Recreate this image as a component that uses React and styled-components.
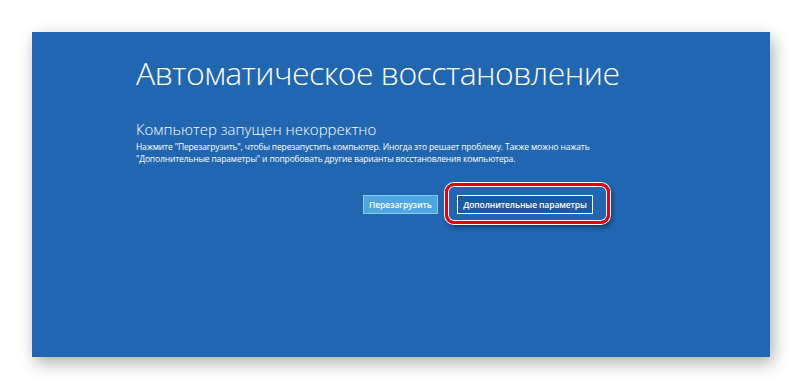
import React from 'react'
import styled, { createGlobalStyle } from 'styled-components'

const GlobalStyle = createGlobalStyle`
  html, body {
    margin: 0;
    padding: 0;
    background: #ffffff;
  }
  body {
    font-family: "Open Sans", "Noto Sans", sans-serif;
  }
`

const Page = styled.div`
  width: 802px;
  height: 390px;
  padding: 32px 0 0 32px;
  box-sizing: border-box;
`

const Screen = styled.div`
  width: 738px;
  height: 325px;
  background: #2066b1;
  box-shadow: 3px 6px 16px rgba(0, 0, 0, 0.32);
  padding: 21px 0 0 104px;
  box-sizing: border-box;
  color: #ffffff;
`

const Title = styled.h1`
  margin: 0;
  font-weight: 300;
  font-size: 32px;
  line-height: 40px;
  letter-spacing: -0.55px;
`

const Subtitle = styled.h2`
  margin: 27px 0 0;
  font-weight: 300;
  font-size: 15px;
  line-height: 18px;
`

const Body = styled.p`
  margin: 3px 0 0;
  font-size: 8.5px;
  line-height: 12px;
  letter-spacing: -0.15px;
  white-space: nowrap;
`

const Actions = styled.div`
  display: flex;
  gap: 19px;
  margin: 30px 0 0 227px;
`

const Button = styled.button`
  width: ${p => p.$width}px;
  height: 19px;
  padding: 0;
  font-family: "Open Sans", "Noto Sans", sans-serif;
  font-size: 8.5px;
  font-weight: 600;
  letter-spacing: -0.1px;
  color: #ffffff;
  background: ${p => (p.$primary ? '#1b5aa0' : '#4ea6e0')};
  border: 1px solid ${p => (p.$primary ? '#ffffff' : '#8ccbf0')};
  cursor: pointer;
`

const Highlight = styled.div`
  position: relative;
  display: flex;
  &::after {
    content: '';
    position: absolute;
    left: -12px;
    right: -17px;
    top: -12px;
    bottom: -10px;
    border: 3px solid #e6000a;
    border-radius: 9px;
    box-shadow: 0 0 0 1px #ffffff, inset 0 0 0 1px #ffffff, 2px 3px 5px rgba(0, 0, 0, 0.45);
    pointer-events: none;
  }
`

export default function App() {
  return (
    <Page>
      <GlobalStyle />
      <Screen>
        <Title>Автоматическое восстановление</Title>
        <Subtitle>Компьютер запущен некорректно</Subtitle>
        <Body>
          Нажмите "Перезагрузить", чтобы перезапустить компьютер. Иногда это решает проблему. Также можно нажать
          <br />
          "Дополнительные параметры" и попробовать другие варианты восстановления компьютера.
        </Body>
        <Actions>
          <Button $width={75}>Перезагрузить</Button>
          <Highlight>
            <Button $primary $width={136}>Дополнительные параметры</Button>
          </Highlight>
        </Actions>
      </Screen>
    </Page>
  )
}
